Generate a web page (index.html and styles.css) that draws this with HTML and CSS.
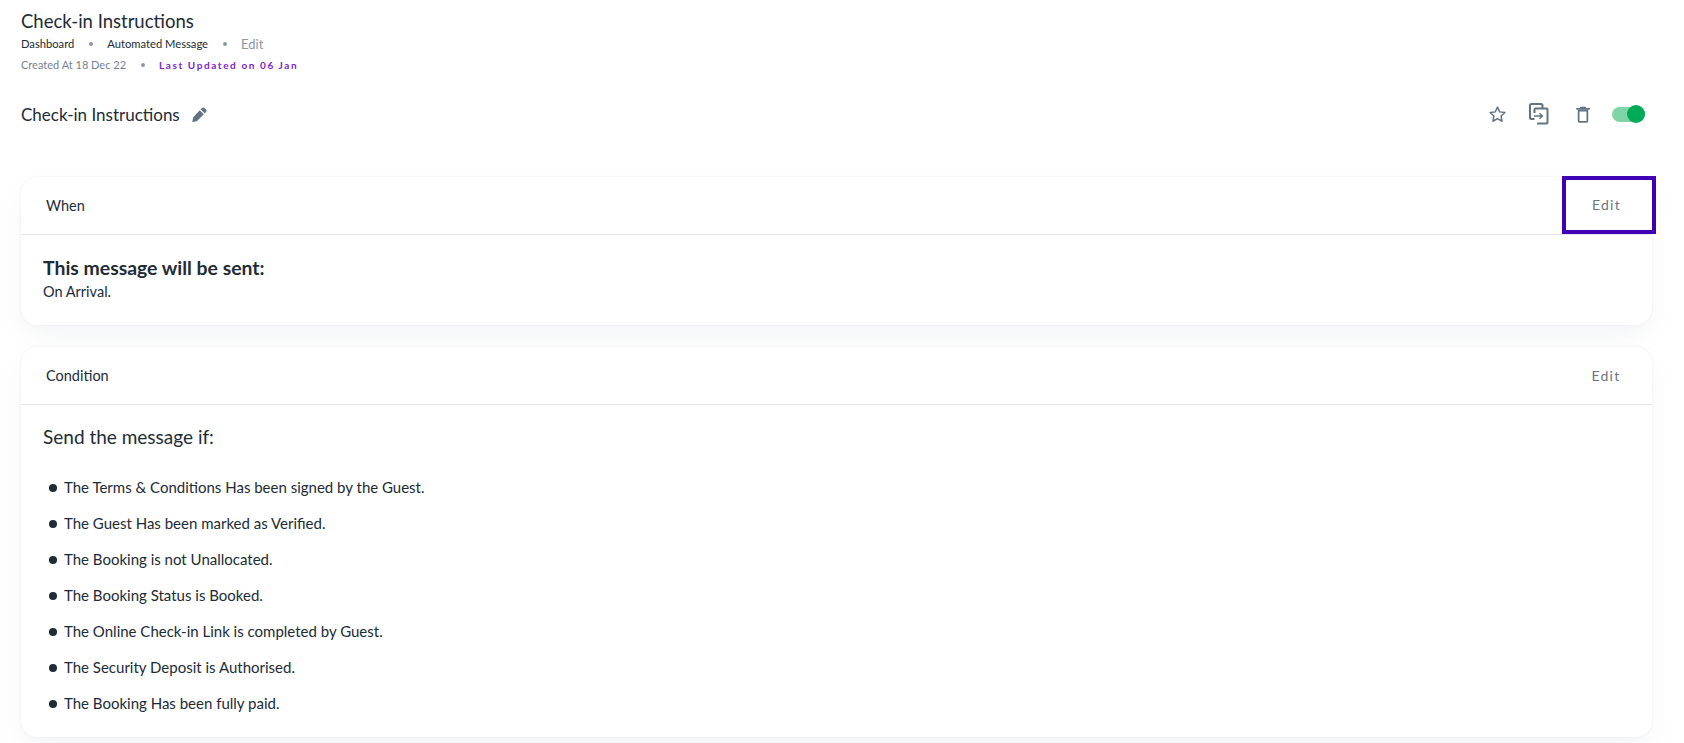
FILE: index.html
```html
<!DOCTYPE html>
<html lang="en">
<head>
  <meta charset="UTF-8" />
  <title>Check-in Instructions</title>
  <link rel="stylesheet" href="styles.css">
</head>
<body>
  <header class="page-head">
    <h1>Check-in Instructions</h1>
    <div class="crumbs">
      <span>Dashboard</span>
      <i class="dot"></i>
      <span>Automated Message</span>
      <i class="dot"></i>
      <span class="crumb-last">Edit</span>
    </div>
    <div class="dates">
      <span>Created At 18 Dec 22</span>
      <i class="dot"></i>
      <span class="updated">Last Updated on 06 Jan</span>
    </div>
  </header>

  <div class="title-row">
    <div class="name">
      <h2>Check-in Instructions</h2>
      <svg class="pencil" width="15" height="15" viewBox="0 0 16 16"><path d="M10.600 1.100a2 2 0 0 1 2.800 0l1.500 1.500a2 2 0 0 1 0 2.800L13.500 6.800 9.200 2.500zM8.300 3.400l4.300 4.300-7.200 7.200-4.300 1a.6.6 0 0 1-.7-.7l.9-4.300z" fill="#637381"/></svg>
    </div>
    <div class="actions">
      <svg class="ic-star" width="19" height="19" viewBox="0 0 18 18" fill="none" stroke="#637381" stroke-width="1.400" stroke-linejoin="round"><path d="M9 2l2.100 4.500 4.900.6-3.600 3.400.9 4.900L9 13l-4.300 2.400.9-4.900L2 7.100l4.900-.6z"/></svg>
      <svg class="ic-copy" width="20" height="22" viewBox="0 0 20 22" fill="none" stroke="#637381" stroke-width="2" stroke-linejoin="round"><path d="M5.500 16H2.500a1.500 1.500 0 0 1-1.500-1.500V2.500A1.500 1.500 0 0 1 2.500 1H12a1.500 1.500 0 0 1 1.500 1.500V5"/><path d="M5.500 10V6.500a1 1 0 0 1 1-1h11a1 1 0 0 1 1 1v13a1 1 0 0 1-1 1H8"/><path d="M5 13h8.500M10.500 10.200l3 2.800-3 2.800" stroke-width="1.500"/></svg>
      <svg class="ic-trash" width="14" height="17" viewBox="0 0 16 19" fill="none" stroke="#637381" stroke-width="2"><path d="M3 5v11.500a1.500 1.500 0 0 0 1.500 1.500h7a1.500 1.500 0 0 0 1.500-1.500V5z"/><path d="M1 3h14M5.500 1.500h5" stroke-linecap="round"/></svg>
      <span class="toggle"><span class="knob"></span></span>
    </div>
  </div>

  <section class="card card-when">
    <div class="card-head">
      <span>When</span>
      <a class="edit edit-marked">Edit</a>
    </div>
    <div class="card-body">
      <h3>This message will be sent:</h3>
      <p>On Arrival.</p>
    </div>
  </section>

  <section class="card">
    <div class="card-head">
      <span>Condition</span>
      <a class="edit">Edit</a>
    </div>
    <div class="card-body cond">
      <h4>Send the message if:</h4>
      <ul>
        <li>The Terms &amp; Conditions Has been signed by the Guest.</li>
        <li>The Guest Has been marked as Verified.</li>
        <li>The Booking is not Unallocated.</li>
        <li>The Booking Status is Booked.</li>
        <li>The Online Check-in Link is completed by Guest.</li>
        <li>The Security Deposit is Authorised.</li>
        <li>The Booking Has been fully paid.</li>
      </ul>
    </div>
  </section>
</body>
</html>
```

FILE: styles.css
```css
* {
  box-sizing: border-box;
  margin: 0;
  padding: 0;
}
body {
  font-family: 'Lato', 'Open Sans', sans-serif;
  background: #fff;
  color: #212b36;
  padding: 10px 32px 0 21px;
  height: 743px;
  overflow: hidden;
}
h1 {
  font-size: 18.5px;
  font-weight: 400;
  line-height: 22px;
}
.crumbs {
  display: flex;
  align-items: center;
  font-size: 11.2px;
  line-height: 16px;
  margin-top: 4px;
}
.crumb-last {
  color: #8c96a3;
  font-size: 13px;
}
.dot {
  width: 4px;
  height: 4px;
  border-radius: 50%;
  background: #8c96a3;
  margin: 0 14.500px;
}
.dates {
  display: flex;
  align-items: center;
  font-size: 11px;
  line-height: 16px;
  color: #77838f;
  margin-top: 5px;
}
.updated {
  color: #7e22ce;
  font-size: 10px;
  font-weight: 700;
  letter-spacing: 1.6px;
}
.title-row {
  display: flex;
  justify-content: space-between;
  align-items: center;
  margin-top: 21px;
  height: 40px;
}
.name {
  display: flex;
  align-items: center;
  gap: 12px;
}
h2 {
  font-size: 17px;
  font-weight: 400;
}
.actions {
  display: flex;
  align-items: center;
  padding-right: 7px;
}
.ic-copy {
  margin-left: 22px;
}
.ic-trash {
  margin-left: 27px;
}
.toggle {
  position: relative;
  display: block;
  width: 33px;
  height: 15px;
  border-radius: 8px;
  background: #80d5a8;
  margin-left: 22px;
}
.knob {
  position: absolute;
  top: -2px;
  right: 0;
  width: 18px;
  height: 18px;
  border-radius: 50%;
  background: #00ab55;
}
.card {
  background: #fff;
  border-radius: 16px;
  box-shadow: 0 0 2px rgba(145, 158, 171, 0.2), 0 12px 24px -4px rgba(145, 158, 171, 0.12);
  margin-bottom: 22px;
}
.card-when {
  margin-top: 43px;
}
.card-head {
  display: flex;
  justify-content: space-between;
  align-items: center;
  height: 58px;
  padding-left: 25px;
  font-size: 14.500px;
  border-bottom: 1px solid #e4e6e9;
}
.edit {
  width: 92px;
  height: 58px;
  display: flex;
  align-items: center;
  justify-content: center;
  color: #6b7580;
  font-size: 14px;
  letter-spacing: 1.200px;
}
.edit-marked {
  align-self: flex-start;
  border: 4px solid #3f00b5;
  margin: -1px -4px 0 0;
  padding-right: 5px;
  width: 94px;
  height: 57.500px;
}
.card-body {
  padding: 21px 22px 0;
  height: 90px;
}
h3 {
  font-size: 19.400px;
  font-weight: 700;
  line-height: 24px;
}
.card-body p {
  font-size: 14.500px;
  line-height: 20px;
  margin-top: 2px;
}
.cond {
  height: 332px;
  padding-top: 20px;
}
h4 {
  font-size: 19px;
  font-weight: 400;
  line-height: 24px;
}
ul {
  list-style: none;
  margin-top: 20px;
}
li {
  position: relative;
  font-size: 15px;
  line-height: 36px;
  padding-left: 21px;
}
li::before {
  content: "";
  position: absolute;
  left: 6px;
  top: 15px;
  width: 8px;
  height: 8px;
  border-radius: 50%;
  background: #212b36;
}
```
